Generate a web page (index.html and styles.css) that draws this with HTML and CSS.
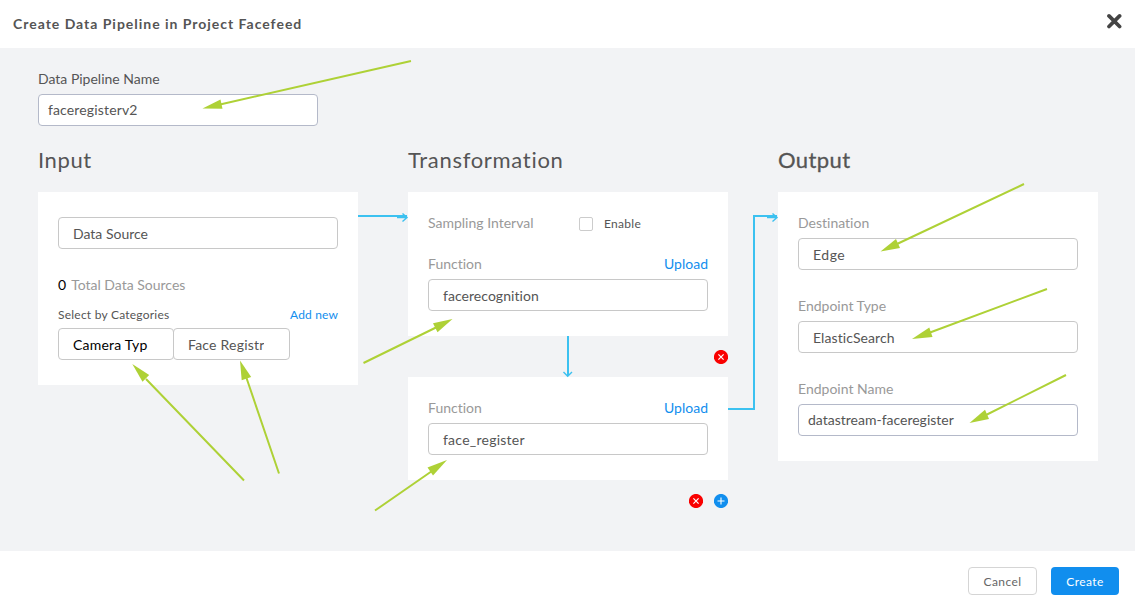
FILE: index.html
```html
<!DOCTYPE html>
<html lang="en">
<head>
<meta charset="utf-8">
<title>Create Data Pipeline</title>
<link rel="stylesheet" href="styles.css">
</head>
<body>
<div class="dialog">
  <header class="dialog-header">
    <h1 class="dialog-title">Create Data Pipeline in Project Facefeed</h1>
    <svg class="close" width="16" height="16" viewBox="0 0 16 16"><path d="M3 2.900 13.600 13.500M13.600 2.900 3 13.500" fill="none" stroke="#444" stroke-width="3.7" stroke-linecap="round"/></svg>
  </header>
  <main class="dialog-body">
    <div class="name-field">
      <label class="name-label">Data Pipeline Name</label>
      <div class="control text-input"><span class="name-value">faceregisterv2</span></div>
    </div>
    <div class="columns">
      <section class="column">
        <h2 class="heading">Input</h2>
        <div class="card input-card">
          <div class="control select"><span>Data Source</span></div>
          <div class="total"><b class="count">0</b><span>Total Data Sources</span></div>
          <div class="row categories"><span class="categories-label">Select by Categories</span><a class="link add-new">Add new</a></div>
          <div class="category-selects">
            <div class="control select camera"><span>Camera Typ</span></div>
            <div class="control select registry"><span class="clip">Face Registr</span></div>
          </div>
        </div>
      </section>
      <section class="column">
        <h2 class="heading heading-wide">Transformation</h2>
        <div class="card">
          <div class="row sampling"><span class="label">Sampling Interval</span><span class="checkbox"></span><span class="enable">Enable</span></div>
          <div class="row field-label"><span class="label">Function</span><a class="link">Upload</a></div>
          <div class="control select"><span class="recognition">facerecognition</span></div>
        </div>
        <div class="actions between">
          <svg width="14" height="14" viewBox="0 0 14 14"><circle cx="7" cy="7" r="7.100" fill="#f90000"/><path d="M4.400 4.400 9.600 9.600M9.600 4.400 4.400 9.600" stroke="#fff" stroke-width="1.2"/></svg>
        </div>
        <div class="card">
          <div class="row field-label"><span class="label">Function</span><a class="link">Upload</a></div>
          <div class="control select"><span class="register">face_register</span></div>
        </div>
        <div class="actions">
          <svg width="14" height="14" viewBox="0 0 14 14"><circle cx="7" cy="7" r="7.100" fill="#f90000"/><path d="M4.400 4.400 9.600 9.600M9.600 4.400 4.400 9.600" stroke="#fff" stroke-width="1.2"/></svg>
          <svg width="14" height="14" viewBox="0 0 14 14"><circle cx="7" cy="7" r="7.100" fill="#118eee"/><path d="M3.500 7H10.500M7 3.500V10.500" stroke="#fff" stroke-width="1.1"/></svg>
        </div>
      </section>
      <section class="column">
        <h2 class="heading heading-active">Output</h2>
        <div class="card output-card">
          <div><div class="row field-label"><span class="label">Destination</span></div><div class="control select"><span class="edge">Edge</span></div></div>
          <div><div class="row field-label"><span class="label">Endpoint Type</span></div><div class="control select"><span class="elastic">ElasticSearch</span></div></div>
          <div><div class="row field-label"><span class="label">Endpoint Name</span></div><div class="control text-input"><span>datastream-faceregister</span></div></div>
        </div>
      </section>
    </div>
  </main>
  <footer class="dialog-footer">
    <button class="button cancel">Cancel</button>
    <button class="button create">Create</button>
  </footer>
  <svg class="overlay" width="1135" height="616" viewBox="0 0 1135 616">
    <g fill="none" stroke="#3cc1f0" stroke-width="2">
      <path d="M358 216H407M568 336V376M728 409H754V216H777"/>
      <path stroke-width="1.4" d="M397 217.5H407M402.500 213.500 407 217.500 402.500 221.500M563.500 372 567.700 376.300 572 372M767 217.500H777M772.500 213.500 777 217.500 772.500 221.500"/>
    </g>
    <g stroke="#aed136" stroke-width="2" fill="none">
      <path d="M411 61 220 104.500M244 480.500 146 379M279 473.500 246.500 378M363.500 363 437 327M375 510.500 432 471M1024 184 897 244M1047 289 930 332.500M1066 375 986 415"/>
    </g>
    <g fill="#aed136">
      <path d="M202.500 108.500 220.500 99.500 222.500 108.800Z"/>
      <path d="M132.300 364 149.200 375 142.500 381.800Z"/>
      <path d="M240 360.500 251.200 377 241.700 380.300Z"/>
      <path d="M452.500 319 433 323.200 437.500 332.300Z"/>
      <path d="M447 460 427.500 467.500 433 475.500Z"/>
      <path d="M880.500 251.500 896 239 900 248Z"/>
      <path d="M912 339 929.300 327.500 932.500 337Z"/>
      <path d="M969.500 423 985 409.700 989 419Z"/>
    </g>
  </svg>
</div>
</body>
</html>
```
FILE: styles.css
```css
* { box-sizing: border-box; }
body { margin: 0; font-family: Lato, "Open Sans", sans-serif; font-size: 14px; color: #555; background: #fff; font-variant-ligatures: none; }
.dialog { position: relative; width: 1135px; height: 616px; display: flex; flex-direction: column; overflow: hidden; white-space: nowrap; }
.dialog-header { height: 48px; flex: none; display: flex; justify-content: space-between; padding: 13px 13px 0; }
.dialog-title { margin: 0; font-size: 14px; line-height: 22px; font-weight: 700; letter-spacing: 0.98px; }
.close { display: block; }
.dialog-body { height: 503px; flex: none; background: #f2f3f5; padding: 22px 37px 0 38px; }
.name-field { width: 280px; }
.name-label { display: block; line-height: 18px; margin-bottom: 6px; }
.name-value { letter-spacing: 0.15px; }
.control { height: 32px; background: #fff; border: 1px solid #c8c8c8; border-radius: 4px; display: flex; align-items: center; }
.select { padding: 0 14px; }
.text-input { padding: 0 9px 2px; border-color: #b4b9c9; }
.columns { display: grid; grid-template-columns: repeat(3, 320px); column-gap: 50px; margin-top: 18px; }
.heading { margin: 0 0 16px; font-size: 22px; line-height: 32px; font-weight: 400; letter-spacing: 0.6px; }
.heading-wide { letter-spacing: 0.7px; }
.heading-active { letter-spacing: 0.4px; -webkit-text-stroke: 0.3px #555; }
.card { background: #fff; padding: 22px 20px 25px; }
.input-card { padding-top: 25px; }
.total { display: flex; gap: 5px; margin-top: 27px; line-height: 18px; color: #999; }
.count { color: #000; font-weight: 400; }
.row { display: flex; line-height: 18px; }
.categories { justify-content: space-between; margin: 12px 0 4px; font-size: 12px; }
.categories-label { letter-spacing: 0.23px; }
.add-new { letter-spacing: 0.15px; }
.link { color: #118eee; }
.category-selects { display: flex; }
.camera { width: 116px; color: #000; letter-spacing: 0.2px; }
.registry { width: 117px; margin-left: -1px; letter-spacing: 0.22px; }
.clip { width: 76px; overflow: hidden; }
.label { color: #999; }
.sampling { margin-bottom: 23px; }
.sampling .label { width: 151px; }
.checkbox { width: 14px; height: 14px; margin: 3px 11px 0 0; border: 1px solid #ccc; border-radius: 2px; }
.enable { font-size: 12px; letter-spacing: 0.3px; position: relative; top: 1px; }
.field-label { justify-content: space-between; margin-bottom: 6px; }
.recognition { letter-spacing: 0.05px; }
.register { letter-spacing: 0.25px; }
.edge { letter-spacing: 0.5px; }
.elastic { letter-spacing: 0.08px; }
.actions { display: flex; justify-content: flex-end; gap: 11px; padding-top: 14px; }
.between { height: 41px; }
.output-card { display: grid; row-gap: 27px; }
.dialog-footer { flex: 1; display: flex; justify-content: flex-end; gap: 14px; padding: 16px 16px 0; }
.button { height: 28px; padding: 1px 0 0; border-radius: 4px; font: 12px Lato, sans-serif; letter-spacing: 0.4px; }
.cancel { width: 69px; color: #666; background: #fff; border: 1px solid #d5d5d5; }
.create { width: 68px; color: #fff; background: #118eee; border: 0; }
.overlay { position: absolute; inset: 0; pointer-events: none; }
```
